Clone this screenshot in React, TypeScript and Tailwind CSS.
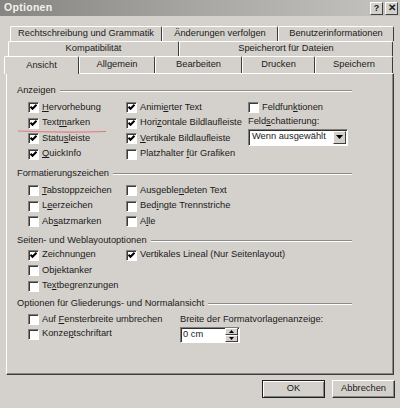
import React from 'react';

const face = 'bg-[#d4d1cc]';

function Box({ checked }: { checked?: boolean }) {
  return (
    <span className="relative w-[11px] h-[11px] shrink-0 bg-white border border-t-[#807e7a] border-l-[#807e7a] border-r-white border-b-white shadow-[inset_1px_1px_0_#3a3a3a]">
      {checked && (
        <svg viewBox="0 0 9 9" className="absolute inset-0 w-[9px] h-[9px]">
          <polyline points="1.5,3.8 3.5,5.8 7.5,1.8" fill="none" stroke="#000" strokeWidth="2" />
        </svg>
      )}
    </span>
  );
}

// label with one underlined access letter
function Lbl({ text, u }: { text: string; u?: number }) {
  if (u === undefined) return <span>{text}</span>;
  return (
    <span>
      {text.slice(0, u)}
      <u className="underline-offset-1">{text[u]}</u>
      {text.slice(u + 1)}
    </span>
  );
}

function Check({ text, u, checked }: { text: string; u?: number; checked?: boolean }) {
  return (
    <div className="flex items-center gap-[3px] h-[15.5px] whitespace-nowrap">
      <Box checked={checked} />
      <Lbl text={text} u={u} />
    </div>
  );
}

function Heading({ children }: { children: React.ReactNode }) {
  return (
    <div className="flex items-center gap-[4px] h-[16px] w-[335px] whitespace-nowrap">
      <span>{children}</span>
      <div className="flex-1 border-t border-t-[#8e8c88] border-b border-b-white" />
    </div>
  );
}

function Tab({ label, w, active }: { label: string; w: number; active?: boolean }) {
  return (
    <div
      style={{ width: w }}
      className={`flex items-center justify-center border-t border-l border-t-white border-l-white border-r border-r-[#3c3c3c] rounded-tl-[2px] rounded-tr-[2px] whitespace-nowrap ${face} ${
        active ? 'h-[18px] -mb-px relative z-10 -ml-[2px]' : 'h-full'
      }`}
    >
      {label}
    </div>
  );
}

function Btn({ children, def }: { children: React.ReactNode; def?: boolean }) {
  return (
    <div
      className={`w-[63px] h-[18px] flex items-center justify-center ${face} border ${
        def
          ? 'border-[#202020] shadow-[inset_1px_1px_0_#fff,inset_-1px_-1px_0_#808080]'
          : 'border-t-white border-l-white border-r-[#303030] border-b-[#303030] shadow-[inset_-1px_-1px_0_#8a8884]'
      }`}
    >
      {children}
    </div>
  );
}

export default function App() {
  return (
    <div
      className={`w-[400px] h-[408px] ${face} text-[9.3px] text-[#1a1a1a] flex flex-col overflow-hidden relative`}
      style={{ fontFamily: '"Liberation Sans", Arial, sans-serif' }}
    >
      {/* title bar */}
      <div className="h-[16px] flex items-center justify-between bg-gradient-to-r from-[#878581] via-[#a9a7a3] to-[#c6c4c0] pl-[4px] pr-[2px]">
        <span className="text-[10.5px] font-bold text-[#f2f2f0] tracking-[0.3px]">Optionen</span>
        <div className="flex gap-[2px]">
          <div className={`w-[13px] h-[13px] ${face} border border-t-white border-l-white border-r-[#404040] border-b-[#404040] flex items-center justify-center text-[9px] font-bold leading-none`}>?</div>
          <div className={`w-[13px] h-[13px] ${face} border border-t-white border-l-white border-r-[#404040] border-b-[#404040] flex items-center justify-center text-[10px] font-bold leading-none`}>✕</div>
        </div>
      </div>

      {/* tab rows */}
      <div className="mt-[10px] flex flex-col">
        <div className="flex h-[15px] pl-[10px]">
          <Tab label="Rechtschreibung und Grammatik" w={152} />
          <Tab label="Änderungen verfolgen" w={116} />
          <Tab label="Benutzerinformationen" w={116} />
        </div>
        <div className="flex h-[15px] pl-[8px]">
          <Tab label="Kompatibilität" w={171} />
          <Tab label="Speicherort für Dateien" w={214} />
        </div>
        <div className="flex h-[17px] pl-[6px] items-end">
          <Tab label="Ansicht" w={75} active />
          <Tab label="Allgemein" w={76} />
          <Tab label="Bearbeiten" w={87} />
          <Tab label="Drucken" w={73} />
          <Tab label="Speichern" w={78} />
        </div>
      </div>

      {/* panel */}
      <div className="relative ml-[6px] w-[388px] h-[302px] border border-t-white border-l-white border-r-[#3a3a3a] border-b-[#3a3a3a] shadow-[inset_-1px_-1px_0_#8a8884] pl-[10px] pt-[9px]">
        <Heading>Anzeigen</Heading>
        <div className="grid grid-cols-[98px_122px_1fr] pl-[11px] mt-px">
          <div>
            <Check text="Hervorhebung" u={0} checked />
            <Check text="Textmarken" u={4} checked />
            <Check text="Statusleiste" u={5} checked />
            <Check text="QuickInfo" u={0} checked />
          </div>
          <div>
            <Check text="Animierter Text" u={5} checked />
            <Check text="Horizontale Bildlaufleiste" u={4} checked />
            <Check text="Vertikale Bildlaufleiste" u={0} checked />
            <Check text="Platzhalter für Grafiken" u={12} />
          </div>
          <div>
            <Check text="Feldfunktionen" u={7} />
            <div className="h-[13px] flex items-center">
              <Lbl text="Feldschattierung:" u={4} />
            </div>
            <div className="w-[100px] h-[17px] bg-white border border-t-[#807e7a] border-l-[#807e7a] border-r-white border-b-white shadow-[inset_1px_1px_0_#303030] flex items-center">
              <span className="flex-1 pl-[3px] whitespace-nowrap">Wenn ausgewählt</span>
              <div className={`w-[13px] h-[13px] mr-px ${face} border border-t-white border-l-white border-r-[#404040] border-b-[#404040] flex items-center justify-center`}>
                <svg viewBox="0 0 7 4" className="w-[7px] h-[4px]">
                  <polygon points="0,0 7,0 3.5,4" fill="#000" />
                </svg>
              </div>
            </div>
          </div>
        </div>

        <div className="mt-[4px]">
          <Heading>Formatierungszeichen</Heading>
        </div>
        <div className="grid grid-cols-[98px_1fr] pl-[11px] mt-px">
          <div>
            <Check text="Tabstoppzeichen" u={0} />
            <Check text="Leerzeichen" u={1} />
            <Check text="Absatzmarken" u={2} />
          </div>
          <div>
            <Check text="Ausgeblendeten Text" u={8} />
            <Check text="Bedingte Trennstriche" u={3} />
            <Check text="Alle" u={1} />
          </div>
        </div>

        <div className="mt-[3px]">
          <Heading>Seiten- und Weblayoutoptionen</Heading>
        </div>
        <div className="grid grid-cols-[98px_1fr] pl-[11px] -mt-[1px]">
          <div>
            <Check text="Zeichnungen" u={8} checked />
            <Check text="Objektanker" u={2} />
            <Check text="Textbegrenzungen" u={2} />
          </div>
          <div>
            <Check text="Vertikales Lineal (Nur Seitenlayout)" checked />
          </div>
        </div>

        <div className="mt-[2px]">
          <Heading>Optionen für Gliederungs- und Normalansicht</Heading>
        </div>
        <div className="flex pl-[11px]">
          <div className="w-[152px]">
            <Check text="Auf Fensterbreite umbrechen" u={4} />
            <div className="-mt-[1px]">
              <Check text="Konzeptschriftart" u={5} />
            </div>
          </div>
          <div className="flex flex-col pt-[2px]">
            <span className="whitespace-nowrap leading-[11px]">Breite der Formatvorlagenanzeige:</span>
            <div className="mt-[2px] w-[60px] h-[16px] bg-white border border-t-[#807e7a] border-l-[#807e7a] border-r-white border-b-white shadow-[inset_1px_1px_0_#303030] flex items-center">
              <span className="flex-1 pl-[2px]">0 cm</span>
              <div className="flex flex-col w-[13px] h-[14px] mr-px">
                <div className={`flex-1 ${face} border border-t-white border-l-white border-r-[#404040] border-b-[#404040] flex items-center justify-center`}>
                  <svg viewBox="0 0 5 3" className="w-[5px] h-[3px]"><polygon points="2.5,0 5,3 0,3" fill="#000" /></svg>
                </div>
                <div className={`flex-1 ${face} border border-t-white border-l-white border-r-[#404040] border-b-[#404040] flex items-center justify-center`}>
                  <svg viewBox="0 0 5 3" className="w-[5px] h-[3px]"><polygon points="0,0 5,0 2.5,3" fill="#000" /></svg>
                </div>
              </div>
            </div>
          </div>
        </div>

        {/* red annotation stroke under Textmarken */}
        <svg className="absolute left-[10px] top-[55px] w-[90px] h-[5px] pointer-events-none" viewBox="0 0 90 5">
          <path d="M1 2 Q 45 4 89 2.5" fill="none" stroke="#e0787a" strokeWidth="1.2" />
        </svg>
      </div>

      {/* buttons */}
      <div className="flex justify-end gap-[7px] pr-[5px] mt-[5px]">
        <Btn def>OK</Btn>
        <Btn>Abbrechen</Btn>
      </div>
    </div>
  );
}
